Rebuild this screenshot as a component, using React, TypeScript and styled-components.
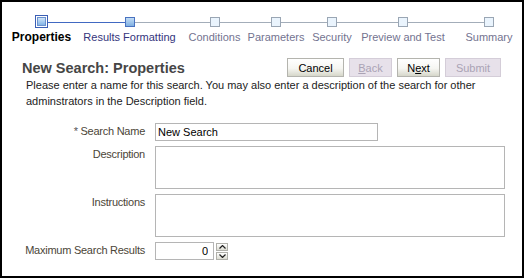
import React from "react"
import styled, { createGlobalStyle } from "styled-components"

type StopState = "current" | "visited" | "unvisited"

interface Step {
  label: string
  width: number
  state: StopState
  leftLine?: string
  rightLine?: string
}

const BLUE_LINE = "#4169c2"
const GREY_LINE = "#a3adb9"

const steps: Step[] = [
  { label: "Properties", width: 67, state: "current", rightLine: BLUE_LINE },
  { label: "Results Formatting", width: 109, state: "visited", leftLine: BLUE_LINE, rightLine: GREY_LINE },
  { label: "Conditions", width: 61, state: "unvisited", leftLine: GREY_LINE, rightLine: GREY_LINE },
  { label: "Parameters", width: 62, state: "unvisited", leftLine: GREY_LINE, rightLine: GREY_LINE },
  { label: "Security", width: 50, state: "unvisited", leftLine: GREY_LINE, rightLine: GREY_LINE },
  { label: "Preview and Test", width: 92, state: "unvisited", leftLine: GREY_LINE, rightLine: GREY_LINE },
  { label: "Summary", width: 80, state: "unvisited", leftLine: GREY_LINE },
]

const App: React.FC = () => (
  <>
    <GlobalStyle />
    <Frame>
      <Train>
        {steps.map((s) => (
          <StepCell key={s.label} $width={s.width}>
            <Track>
              <Line $color={s.leftLine} />
              {s.state === "current" ? (
                <CurrentStop>
                  <CurrentInner />
                </CurrentStop>
              ) : (
                <Stop $visited={s.state === "visited"} />
              )}
              <Line $color={s.rightLine} />
            </Track>
            <StepLabel $state={s.state}>{s.label}</StepLabel>
          </StepCell>
        ))}
      </Train>

      <Content>
        <TitleRow>
          <Title>New Search: Properties</Title>
          <Buttons>
            <Button $width={57}>Cancel</Button>
            <Button $width={43} disabled>
              <u>B</u>ack
            </Button>
            <Button $width={43}>
              N<u>e</u>xt
            </Button>
            <Button $width={56} disabled>
              Submit
            </Button>
          </Buttons>
        </TitleRow>
        <Intro>
          Please enter a name for this search. You may also enter a description of the search for other
          adminstrators in the Description field.
        </Intro>
      </Content>

      <Form>
        <Label>
          <Required>*</Required> Search Name
        </Label>
        <TextInput defaultValue="New Search" />

        <Label>Description</Label>
        <TextArea />

        <Label>Instructions</Label>
        <TextArea />

        <Label>Maximum Search Results</Label>
        <NumberField>
          <NumberInput defaultValue="0" />
          <Spinner>
            <SpinButton aria-label="Increase">
              <svg width="7" height="4" viewBox="0 0 7 4">
                <path d="M0.5 3.5 L3.5 0.5 L6.5 3.5" fill="none" stroke="#222" strokeWidth="1.2" />
              </svg>
            </SpinButton>
            <SpinButton aria-label="Decrease">
              <svg width="7" height="4" viewBox="0 0 7 4">
                <path d="M0.5 0.5 L3.5 3.5 L6.5 0.5" fill="none" stroke="#222" strokeWidth="1.2" />
              </svg>
            </SpinButton>
          </Spinner>
        </NumberField>
      </Form>
    </Frame>
  </>
)
export default App

const GlobalStyle = createGlobalStyle`
  body {
    margin: 0;
    background: #ffffff;
    font-family: "Liberation Sans", Arial, sans-serif;
    font-size: 11px;
  }
`

const Frame = styled.div`
  box-sizing: border-box;
  width: 524px;
  height: 278px;
  border: 2px solid #000000;
  background: #ffffff;
  overflow: hidden;
`

const Train = styled.div`
  display: flex;
  padding: 13px 0 0 6px;
`

const StepCell = styled.div<{ $width: number }>`
  flex: none;
  width: ${(p) => p.$width}px;
  display: flex;
  flex-direction: column;
  align-items: center;
`

const Track = styled.div`
  align-self: stretch;
  height: 13px;
  display: flex;
  align-items: center;
`

const Line = styled.div<{ $color?: string }>`
  flex: 1;
  height: 1px;
  margin-top: 1px;
  background: ${(p) => p.$color ?? "transparent"};
`

const CurrentStop = styled.div`
  box-sizing: border-box;
  width: 13px;
  height: 13px;
  border: 1px solid #3b5fb5;
  background: #ffffff;
  padding: 1px;
`

const CurrentInner = styled.div`
  box-sizing: border-box;
  width: 100%;
  height: 100%;
  border: 1px solid #6b92cf;
  background: linear-gradient(#cfe4f8, #84b5e6);
`

const Stop = styled.div<{ $visited: boolean }>`
  box-sizing: border-box;
  width: 10px;
  height: 10px;
  margin-top: 1px;
  border: 1px solid ${(p) => (p.$visited ? "#4a72c0" : "#9aa6b4")};
  background: ${(p) => (p.$visited ? "linear-gradient(#c2dcf5, #80b0e2)" : "#eaf4fd")};
`

const StepLabel = styled.div<{ $state: StopState }>`
  margin-top: 3px;
  white-space: nowrap;
  line-height: 13px;
  font-size: ${(p) => (p.$state === "current" ? "12px" : "11px")};
  font-weight: ${(p) => (p.$state === "current" ? "bold" : "normal")};
  color: ${(p) => (p.$state === "current" ? "#000000" : p.$state === "visited" ? "#34347c" : "#737390")};
`

const Content = styled.div`
  padding: 14px 21px 0 20px;
`

const TitleRow = styled.div`
  display: flex;
  align-items: center;
  justify-content: space-between;
  height: 19px;
`

const Title = styled.h1`
  margin: 0;
  font-size: 14.5px;
  font-weight: bold;
  color: #464646;
`

const Buttons = styled.div`
  display: flex;
  gap: 5px;
`

const Button = styled.button<{ $width: number }>`
  box-sizing: border-box;
  width: ${(p) => p.$width}px;
  height: 19px;
  padding: 0;
  font-family: inherit;
  font-size: 11px;
  color: #000000;
  border: 1px solid #b4b4ae;
  background: linear-gradient(#ffffff 0%, #f6f6f2 55%, #d6d7ca 100%);

  &:disabled {
    color: #aaa3b5;
    border-color: #d4cdd8;
    background: #e7e1ea;
  }
`

const Intro = styled.p`
  margin: 0;
  padding-left: 4px;
  line-height: 16px;
  color: #222222;
`

const Form = styled.div`
  display: grid;
  grid-template-columns: 143px auto;
  column-gap: 10px;
  row-gap: 5px;
  margin-top: 14px;
  justify-content: start;
`

const Label = styled.div`
  justify-self: end;
  white-space: nowrap;
  line-height: 16px;
  letter-spacing: -0.25px;
  color: #4b4537;
`

const Required = styled.span`
  color: #555555;
`

const fieldBase = `
  box-sizing: border-box;
  border: 1px solid #b5b5b5;
  font-family: "Liberation Sans", Arial, sans-serif;
  font-size: 11px;
  color: #000000;
  background: #ffffff;
  outline: none;
`

const TextInput = styled.input`
  ${fieldBase}
  width: 223px;
  height: 18px;
  padding: 0 2px;
`

const TextArea = styled.textarea`
  ${fieldBase}
  display: block;
  width: 350px;
  height: 43px;
  resize: none;
`

const NumberField = styled.div`
  display: flex;
  align-items: center;
  gap: 2px;
`

const NumberInput = styled.input`
  ${fieldBase}
  width: 59px;
  height: 18px;
  padding: 0 5px 0 2px;
  text-align: right;
`

const Spinner = styled.div`
  display: flex;
  flex-direction: column;
  gap: 1px;
`

const SpinButton = styled.button`
  box-sizing: border-box;
  width: 12px;
  height: 8px;
  padding: 0;
  display: flex;
  align-items: center;
  justify-content: center;
  border: 1px solid #b0b0aa;
  background: linear-gradient(#ffffff, #dcdcd2);
`
